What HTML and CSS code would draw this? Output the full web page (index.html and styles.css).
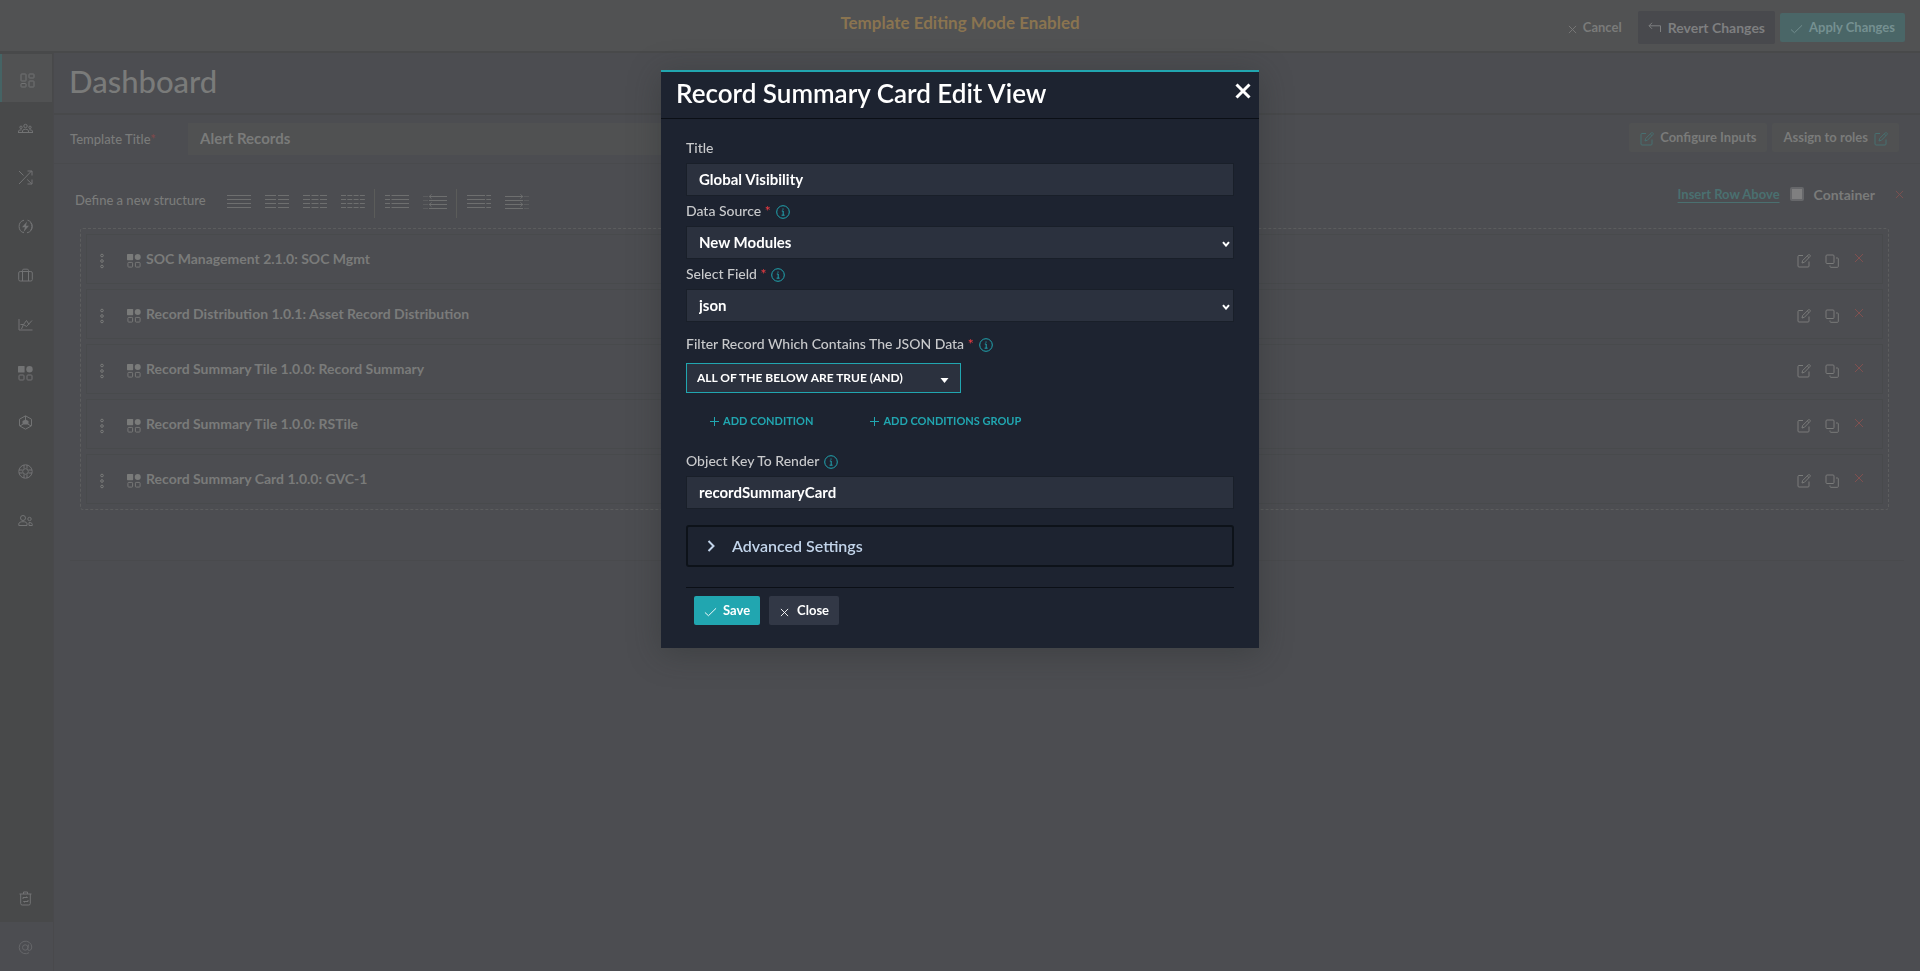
FILE: index.html
```html
<!DOCTYPE html>
<html lang="en">
<head>
<meta charset="utf-8">
<title>Dashboard</title>
<link rel="stylesheet" href="styles.css">
</head>
<body>
<svg class="defs" aria-hidden="true">
  <symbol id="i-x" viewBox="0 0 10 10"><path d="M1 1l8 8M9 1L1 9"/></symbol>
  <symbol id="i-check" viewBox="0 0 14 10"><path d="M1 5.5L4.8 9L13 1"/></symbol>
  <symbol id="i-edit" viewBox="0 0 14 14"><path d="M6 1.5H2a1 1 0 0 0-1 1V12a1 1 0 0 0 1 1h9a1 1 0 0 0 1-1V7.500M5 9l.6-2.400L11.400.8a.8.8 0 0 1 1.200 0l.5.5a.8.8 0 0 1 0 1.100L7.400 8.300zM10.300 2l1.700 1.700"/></symbol>
  <symbol id="i-copy" viewBox="0 0 14 14"><rect x="1" y="1" width="8" height="8.500" rx="1"/><path d="M11 4h1.500a.8.8 0 0 1 .8.8v7.700a.8.8 0 0 1-.8.8H5.800a.8.8 0 0 1-.8-.8V11.500"/></symbol>
  <symbol id="i-widget" viewBox="0 0 15 15"><rect class="solid" x="0" y="0" width="6.600" height="6.600" rx=".6"/><circle class="solid" cx="11.500" cy="3.300" r="3.200"/><rect x="1" y="9" width="5" height="5" rx=".8"/><rect x="9" y="9" width="5" height="5" rx=".8"/></symbol>
  <symbol id="i-dots" viewBox="0 0 4 16"><circle cx="2" cy="2.500" r="1.300"/><circle cx="2" cy="8" r="1.300"/><circle cx="2" cy="13.500" r="1.300"/></symbol>
  <symbol id="i-info" viewBox="0 0 14 14"><circle cx="7" cy="7" r="6.300"/><path d="M5.800 6h1.400v4M5.600 10.200h3M7 3.500v1.200"/></symbol>
  <symbol id="i-down" viewBox="0 0 8 6"><path d="M1 1.200L4 4.600L7 1.200"/></symbol>
  <symbol id="i-plus" viewBox="0 0 9 9"><path d="M4.500 0v9M0 4.500h9"/></symbol>
</svg>

<div class="app">
  <header class="topbar">
    <p class="mode">Template Editing Mode Enabled</p>
    <div class="top-actions">
      <button class="btn plain"><svg class="ic s9"><use href="#i-x"/></svg>Cancel</button>
      <button class="btn revert"><svg class="ic s14" viewBox="0 0 14 12"><path d="M4 .8L1 3.800L4 6.800M1 3.800h11.500V10"/></svg>Revert Changes</button>
      <button class="btn apply"><svg class="ic check"><use href="#i-check"/></svg>Apply Changes</button>
    </div>
  </header>

  <div class="body">
    <nav class="sidebar" aria-label="Main">
      <a class="nav active" href="#" aria-label="Dashboard"><svg class="ic s15" viewBox="0 0 15 15"><rect x="1" y="1" width="5" height="7" rx=".5"/><rect x="9" y="1" width="5" height="4" rx=".5"/><rect x="1" y="10.500" width="5" height="3.500" rx=".5"/><rect x="9" y="8" width="5" height="6" rx=".5"/></svg></a>
      <a class="nav" href="#" aria-label="Teams"><svg class="ic s15" viewBox="0 0 15 15"><circle cx="7.500" cy="5" r="1.700"/><circle cx="3" cy="6.300" r="1.200"/><circle cx="12" cy="6.300" r="1.200"/><path d="M4.500 11.500V10q0-1.800 3-1.800t3 1.800v1.500zM.6 11.500V10q0-1.200 3-1.200M14.400 11.500V10q0-1.200-3-1.200M0 11.500h15"/></svg></a>
      <a class="nav" href="#" aria-label="Automation"><svg class="ic s15" viewBox="0 0 15 15"><path d="M1 14L13.500 1M9.500 1h4.500v4.500M1 1l4.500 4.500M9.200 9.500l4.500 4.300M9.500 14H14V9.500"/></svg></a>
      <a class="nav" href="#" aria-label="Response"><svg class="ic s15" viewBox="0 0 15 15"><path d="M9.500 1.200A6.500 6.500 0 0 1 9 13.800M6 13.800A6.500 6.500 0 0 1 6 1.200M12.500 3.500a6.500 6.500 0 0 1 0 8"/><path class="solid" d="M9 2.500L4 8.300h3L5.500 13L11 6.700H8z"/></svg></a>
      <a class="nav" href="#" aria-label="Resources"><svg class="ic s15" viewBox="0 0 15 15"><rect x=".7" y="3.500" width="13.600" height="9.500" rx="1.500"/><path d="M4.500 13V2.500a1.300 1.300 0 0 1 1.300-1.300h3.400a1.300 1.300 0 0 1 1.300 1.300V13"/></svg></a>
      <a class="nav" href="#" aria-label="Reports"><svg class="ic s15" viewBox="0 0 15 15"><path d="M1 2v11h13.500M3.500 12l2-4.500 3 2L14 3.500M2.500 7.500h3l3-4 2.500 4"/></svg></a>
      <a class="nav" href="#" aria-label="Widgets"><svg class="ic s15"><use href="#i-widget"/></svg></a>
      <a class="nav" href="#" aria-label="Content hub"><svg class="ic s15" viewBox="0 0 15 15"><path d="M7.500.8l6 3.400v6.600l-6 3.400-6-3.400V4.200zM7.500 1v4M2 10.800l3-1.500M13 10.800l-3-1.500"/><path class="solid" d="M7.500 4.500l3 1.500v3.500h-6V6z"/></svg></a>
      <a class="nav" href="#" aria-label="Help"><svg class="ic s15" viewBox="0 0 15 15"><circle cx="7.500" cy="7.500" r="6.700"/><circle cx="7.500" cy="7.500" r="2.800"/><path d="M6 1v3.500M9 1v3.500M6 10.500V14M9 10.500V14M1 6h3.500M1 9h3.500M10.500 6H14M10.500 9H14"/></svg></a>
      <a class="nav" href="#" aria-label="Users"><svg class="ic s15" viewBox="0 0 15 15"><circle cx="5" cy="5" r="2.500"/><circle cx="11.500" cy="6" r="1.700"/><path d="M.8 12.500V11q0-2.300 4.200-2.300T9 11v1.500zM11 9.500q3.300-.2 3.300 2v1H11z"/></svg></a>
      <div class="nav-space"></div>
      <a class="nav" href="#" aria-label="Recycle bin"><svg class="ic s15" viewBox="0 0 15 15"><path d="M1.500 3h12M5.500 3V1h4v2M2.700 3v9.500a1.500 1.500 0 0 0 1.500 1.500h6.600a1.500 1.500 0 0 0 1.500-1.500V3M5 8V6.500h4.500L8.500 5.500M10 9v1.500H5.500l1 1"/></svg></a>
      <a class="nav about" href="#" aria-label="About"><svg class="ic s15" viewBox="0 0 15 15"><circle cx="7.200" cy="7.500" r="2.700"/><path d="M10.500 4.500L9.800 9q0 1.500 1.500 1.500 2.500-.3 2.500-3.500A6.300 6.300 0 1 0 11 12.700"/></svg></a>
    </nav>

    <main class="main">
      <h1 class="page-title">Dashboard</h1>
      <div class="template-row">
        <label class="template-label" for="tpl">Template Title<span class="star">*</span></label>
        <input class="template-input" id="tpl" type="text" value="Alert Records">
        <div class="template-actions">
          <button class="btn soft"><svg class="ic s14 teal"><use href="#i-edit"/></svg>Configure Inputs</button>
          <button class="btn soft"><span>Assign to roles</span><svg class="ic s14 teal"><use href="#i-edit"/></svg></button>
        </div>
      </div>

      <section class="structure">
        <div class="structure-bar">
          <span class="structure-label">Define a new structure</span>
          <div class="layouts">
            <button class="lay" aria-label="One column"><svg class="lines" viewBox="0 0 24 16"><path d="M0 2.500h24M0 6.500h24M0 10.500h24M0 14.500h24"/></svg></button>
            <button class="lay" aria-label="Two columns"><svg class="lines" viewBox="0 0 24 16"><path stroke-dasharray="11 2" d="M0 2.500h24M0 6.500h24M0 10.500h24M0 14.500h24"/></svg></button>
            <button class="lay" aria-label="Three columns"><svg class="lines" viewBox="0 0 24 16"><path stroke-dasharray="7 1.500" d="M0 2.500h24M0 6.500h24M0 10.500h24M0 14.500h24"/></svg></button>
            <button class="lay" aria-label="Four columns"><svg class="lines" viewBox="0 0 24 16"><path stroke-dasharray="5 1.300" d="M0 2.500h24M0 6.500h24M0 10.500h24M0 14.500h24"/></svg></button>
          </div>
          <div class="layouts ruled">
            <button class="lay" aria-label="Narrow left"><svg class="lines" viewBox="0 0 24 16"><path stroke-dasharray="5 1.500 20 0" d="M0 2.500h24M0 6.500h24M0 10.500h24M0 14.500h24"/></svg></button>
            <button class="lay low" aria-label="Collapsible left"><svg class="lines" viewBox="0 0 24 16"><path class="faint" d="M0 2.500h5M0 6.500h5M0 10.500h5M0 14.500h5"/><path d="M6 2.500h18M6 6.500h18M6 10.500h18M6 14.500h18M8.500.3L6.300 2.500l2.200 2.200M8.500 8.300l-2.200 2.200 2.200 2.200"/></svg></button>
          </div>
          <div class="layouts ruled">
            <button class="lay" aria-label="Narrow right"><svg class="lines" viewBox="0 0 24 16"><path stroke-dasharray="18 1.300" d="M0 2.500h24M0 6.500h24M0 10.500h24M0 14.500h24"/></svg></button>
            <button class="lay low" aria-label="Collapsible right"><svg class="lines" viewBox="0 0 24 16"><path class="faint" d="M19 2.500h5M19 6.500h5M19 10.500h5M19 14.500h5"/><path d="M0 2.500h18M0 6.500h18M0 10.500h18M0 14.500h18M15.500.3l2.200 2.200-2.200 2.200M15.500 8.300l2.200 2.200-2.200 2.200"/></svg></button>
          </div>
          <div class="row-tools">
            <a class="insert" href="#">Insert Row Above</a>
            <label class="container-check"><input type="checkbox">Container</label>
            <button class="icon-btn red" aria-label="Remove row"><svg class="ic s9"><use href="#i-x"/></svg></button>
          </div>
        </div>

        <ul class="widgets">
          <li class="widget"><svg class="dots"><use href="#i-dots"/></svg><svg class="ic s14 mark"><use href="#i-widget"/></svg><span class="name">SOC Management 2.1.0: SOC Mgmt</span><button class="icon-btn" aria-label="Edit"><svg class="ic s14"><use href="#i-edit"/></svg></button><button class="icon-btn" aria-label="Copy"><svg class="ic s14"><use href="#i-copy"/></svg></button><button class="icon-btn red" aria-label="Remove"><svg class="ic s10"><use href="#i-x"/></svg></button></li>
          <li class="widget"><svg class="dots"><use href="#i-dots"/></svg><svg class="ic s14 mark"><use href="#i-widget"/></svg><span class="name">Record Distribution 1.0.1: Asset Record Distribution</span><button class="icon-btn" aria-label="Edit"><svg class="ic s14"><use href="#i-edit"/></svg></button><button class="icon-btn" aria-label="Copy"><svg class="ic s14"><use href="#i-copy"/></svg></button><button class="icon-btn red" aria-label="Remove"><svg class="ic s10"><use href="#i-x"/></svg></button></li>
          <li class="widget"><svg class="dots"><use href="#i-dots"/></svg><svg class="ic s14 mark"><use href="#i-widget"/></svg><span class="name">Record Summary Tile 1.0.0: Record Summary</span><button class="icon-btn" aria-label="Edit"><svg class="ic s14"><use href="#i-edit"/></svg></button><button class="icon-btn" aria-label="Copy"><svg class="ic s14"><use href="#i-copy"/></svg></button><button class="icon-btn red" aria-label="Remove"><svg class="ic s10"><use href="#i-x"/></svg></button></li>
          <li class="widget"><svg class="dots"><use href="#i-dots"/></svg><svg class="ic s14 mark"><use href="#i-widget"/></svg><span class="name">Record Summary Tile 1.0.0: RSTile</span><button class="icon-btn" aria-label="Edit"><svg class="ic s14"><use href="#i-edit"/></svg></button><button class="icon-btn" aria-label="Copy"><svg class="ic s14"><use href="#i-copy"/></svg></button><button class="icon-btn red" aria-label="Remove"><svg class="ic s10"><use href="#i-x"/></svg></button></li>
          <li class="widget"><svg class="dots"><use href="#i-dots"/></svg><svg class="ic s14 mark"><use href="#i-widget"/></svg><span class="name">Record Summary Card 1.0.0: GVC-1</span><button class="icon-btn" aria-label="Edit"><svg class="ic s14"><use href="#i-edit"/></svg></button><button class="icon-btn" aria-label="Copy"><svg class="ic s14"><use href="#i-copy"/></svg></button><button class="icon-btn red" aria-label="Remove"><svg class="ic s10"><use href="#i-x"/></svg></button></li>
        </ul>
      </section>
    </main>
  </div>
</div>

<div class="overlay">
  <div class="modal" role="dialog" aria-modal="true" aria-labelledby="dlg-title">
    <div class="modal-head">
      <h2 class="modal-title" id="dlg-title">Record Summary Card Edit View</h2>
      <button class="modal-x" aria-label="Close dialog"><svg class="ic s16" viewBox="0 0 16 16"><path d="M1.500 1.500l13 13M14.500 1.500l-13 13"/></svg></button>
    </div>
    <form class="modal-body">
      <div class="field">
        <div class="label-row"><label class="label" for="f-title">Title</label></div>
        <input class="control" id="f-title" type="text" value="Global Visibility">
      </div>
      <div class="field">
        <div class="label-row"><label class="label" for="f-src">Data Source <span class="req">*</span></label><svg class="ic s14 info"><use href="#i-info"/></svg></div>
        <div class="select"><select class="control" id="f-src"><option>New Modules</option></select><svg class="ic chev"><use href="#i-down"/></svg></div>
      </div>
      <div class="field">
        <div class="label-row"><label class="label" for="f-field">Select Field <span class="req">*</span></label><svg class="ic s14 info"><use href="#i-info"/></svg></div>
        <div class="select"><select class="control" id="f-field"><option>json</option></select><svg class="ic chev"><use href="#i-down"/></svg></div>
      </div>
      <div class="filter">
        <div class="label-row"><label class="label" for="f-logic">Filter Record Which Contains The JSON Data <span class="req">*</span></label><svg class="ic s14 info"><use href="#i-info"/></svg></div>
        <div class="select logic"><select class="logic-control" id="f-logic"><option>ALL OF THE BELOW ARE TRUE (AND)</option></select><svg class="caret" viewBox="0 0 8 5"><path d="M0 0h8L4 5z"/></svg></div>
        <div class="adds">
          <button class="add" type="button"><svg class="ic s9"><use href="#i-plus"/></svg>ADD CONDITION</button>
          <button class="add" type="button"><svg class="ic s9"><use href="#i-plus"/></svg>ADD CONDITIONS GROUP</button>
        </div>
      </div>
      <div class="field">
        <div class="label-row"><label class="label" for="f-key">Object Key To Render</label><svg class="ic s14 info"><use href="#i-info"/></svg></div>
        <input class="control" id="f-key" type="text" value="recordSummaryCard">
      </div>
      <button class="advanced" type="button"><svg class="ic adv-ic" viewBox="0 0 8 12"><path d="M1.500 1L6.500 6l-5 5"/></svg><span>Advanced Settings</span></button>
      <div class="modal-foot">
        <button class="btn save" type="button"><svg class="ic check"><use href="#i-check"/></svg>Save</button>
        <button class="btn close" type="button"><svg class="ic s9"><use href="#i-x"/></svg>Close</button>
      </div>
    </form>
  </div>
</div>
</body>
</html>
```
FILE: styles.css
```css
* { box-sizing: border-box; }

body {
  margin: 0;
  background: #4c4d51;
  color: #7a7b7a;
  font-family: Lato, "Liberation Sans", sans-serif;
  font-size: 14px;
  font-weight: 700;
}

button, input, select {
  font: inherit;
  color: inherit;
  border: 0;
  background: none;
  padding: 0;
  margin: 0;
}

.defs { display: none; }

.ic {
  flex: none;
  fill: none;
  stroke: currentColor;
  stroke-width: 1;
}
.solid { fill: currentColor; stroke: none; }
.s9 { width: 9px; height: 9px; }
.s10 { width: 10px; height: 10px; }
.s14 { width: 14px; height: 14px; }
.s15 { width: 15px; height: 15px; }
.s16 { width: 16px; height: 16px; stroke-width: 3; }
.check { width: 13px; height: 10px; }
.teal { color: #477071; }

.app {
  display: flex;
  flex-direction: column;
  min-height: 100vh;
}

.topbar {
  display: grid;
  grid-template-columns: 1fr auto 1fr;
  align-items: center;
  height: 53px;
  padding: 0 15px;
  background: #515253;
  border-bottom: 2px solid #48494a;
}
.mode {
  grid-column: 2;
  margin: 0 0 6px 0;
  font-size: 17px;
  line-height: 20px;
  color: #8a7450;
}
.top-actions {
  display: flex;
  justify-content: flex-end;
  align-items: center;
  gap: 5px;
  padding-top: 4px;
}

.btn {
  display: inline-flex;
  align-items: center;
  gap: 6px;
  height: 29px;
  padding: 0 10px 2px;
  border-radius: 2px;
  font-size: 13px;
}
.btn .ic { margin-top: 5px; }
.plain { padding-right: 11px; }
.revert {
  height: 33px;
  padding: 0 10px 1px;
  background: #48494d;
  color: #7e7f80;
  font-size: 14px;
}
.revert .ic { margin-top: 2px; }
.apply { background: #4a6667; color: #759091; }
.soft { background: #505152; gap: 6px; padding: 0 11px 2px; }

.body { display: flex; flex: 1; }

.sidebar {
  display: flex;
  flex-direction: column;
  flex: none;
  width: 54px;
  background: #48494a;
  border-right: 1px solid #49494c;
  padding-top: 1px;
}
.nav {
  display: flex;
  align-items: center;
  justify-content: center;
  height: 49px;
  padding: 2px 2px 0 0;
  color: #727374;
}
.nav.active {
  height: 48px;
  margin: 0 1px 1px 0;
  padding: 4px 0 0 0;
  background: #515253;
  border-left: 2px solid #456465;
}
.nav-space { flex: 1; }
.about { background: #4c4d51; color: #66676a; }

.main { flex: 1; min-width: 0; }

.page-title {
  margin: 0;
  padding: 10px 15px 14px;
  font-size: 31px;
  line-height: 36px;
  font-weight: 500;
  border-bottom: 2px solid #48494b;
}

.template-row {
  display: flex;
  align-items: flex-start;
  height: 49px;
  padding: 8px 21px 0 16px;
  border-bottom: 1px solid #494a4d;
}
.template-label {
  width: 118px;
  line-height: 32px;
  font-size: 13px;
  font-weight: 500;
}
.star { color: #80494b; }
.template-input {
  flex: 0 1 700px;
  min-width: 0;
  height: 32px;
  padding: 0 12px 2px;
  background: #505152;
  font-size: 15px;
}
.template-actions { display: flex; gap: 5px; margin-left: auto; }

.structure {
  margin: 0 16px;
  padding-bottom: 50px;
  border-bottom: 1px solid #494a4d;
}
.structure-bar {
  display: flex;
  align-items: flex-start;
  height: 64px;
  padding: 25px 0 0 5px;
}
.structure-label { width: 145px; line-height: 22px; font-size: 13px; font-weight: 500; }
.layouts {
  display: flex;
  gap: 14px;
  height: 29px;
  padding: 4px 9px 0 7px;
}
.ruled { padding-left: 10px; border-left: 1px solid #5b5c5a; }
.lay { display: block; height: 16px; }
.low { padding-top: 1px; }
.lines {
  display: block;
  width: 24px;
  height: 16px;
  fill: none;
  stroke: #6e6f6f;
}
.faint { stroke: #5b5c5e; }
.row-tools {
  display: flex;
  align-items: center;
  gap: 10px;
  height: 10px;
  margin-left: auto;
  font-size: 13px;
}
.insert { color: #4a7070; text-underline-offset: 3px; }
.container-check { display: flex; align-items: center; gap: 10px; font-size: 14px; }
.container-check input {
  appearance: none;
  width: 14px;
  height: 14px;
  border: 2px solid #66676a;
  border-radius: 2px;
  background: #7f7f80;
}
.icon-btn { display: flex; }
.row-tools .icon-btn { margin-left: 10px; }
.red { color: #80504f; }

.widgets {
  display: flex;
  flex-direction: column;
  gap: 5px;
  list-style: none;
  margin: 0 15px 0 10px;
  padding: 5px;
  border: 1px dashed #5c5d5e;
  border-radius: 3px;
}
.widget {
  display: flex;
  align-items: center;
  height: 50px;
  padding: 4px 16px 0 13px;
  border: 1px solid #484a4c;
}
.dots {
  width: 4px;
  height: 16px;
  margin-right: 23px;
  fill: none;
  stroke: currentColor;
}
.mark { margin-right: 5px; }
.name { flex: 1; padding-bottom: 5px; }
.widget .icon-btn { margin-left: 14px; }
.widget .red { margin-left: 15px; padding: 0 2px 6px 0; }

.overlay {
  position: fixed;
  inset: 0;
  display: flex;
  justify-content: center;
  align-items: flex-start;
  padding-top: 70px;
}
.modal {
  width: 598px;
  max-width: 100%;
  background: #1d2330;
  border-top: 2px solid #21a6b0;
  box-shadow: 0 5px 30px rgba(40, 44, 46, 0.4);
  color: #fff;
}
.modal-head {
  display: flex;
  justify-content: space-between;
  align-items: flex-start;
  padding: 6px 8px 10px 15px;
  border-bottom: 1px solid #0b0f16;
}
.modal-title {
  margin: 0;
  font-size: 26px;
  line-height: 30px;
  font-weight: 600;
}
.modal-x { display: flex; padding-top: 5px; }

.modal-body { padding: 19px 25px 15px; }
.label { font-weight: 500; color: #c9cacc; font-size: 14px; line-height: 20px; }
.label-row { display: flex; align-items: center; gap: 5px; padding-bottom: 5px; }
.info { color: #21a6b0; margin-top: 2px; }
.req { color: #ef3b41; }
.field { margin-bottom: 5px; }
.control {
  display: block;
  width: 100%;
  height: 33px;
  padding: 0 12px 2px;
  background: #2b313e;
  border: 1px solid #191f29;
  font-size: 15px;
  appearance: none;
}
.select { position: relative; }
.chev {
  position: absolute;
  right: 4px;
  top: 15px;
  width: 8px;
  height: 6px;
  stroke-width: 2;
}
.filter { padding-top: 7px; }
.logic { width: 275px; margin-top: 4px; }
.logic-control {
  display: block;
  width: 100%;
  height: 30px;
  padding: 0 10px 2px;
  background: #2b313e;
  border: 1px solid #21a6b0;
  font-size: 12px;
  appearance: none;
}
.caret {
  position: absolute;
  right: 12px;
  top: 15px;
  width: 9px;
  height: 5px;
  fill: #fff;
}
.adds { display: flex; gap: 57px; padding: 18px 0 20px 24px; }
.add {
  display: flex;
  align-items: center;
  gap: 4px;
  font-size: 11px;
  line-height: 20px;
  color: #21a6b0;
}
.advanced {
  display: flex;
  align-items: center;
  gap: 17px;
  width: 100%;
  height: 42px;
  margin-top: 16px;
  padding: 0 19px 2px;
  border: 2px solid #0d1219;
  border-radius: 3px;
  color: #c2d4ea;
  font-size: 16px;
  font-weight: 600;
}
.adv-ic { width: 8px; height: 12px; margin-top: 2px; stroke-width: 2; }
.modal-foot {
  display: flex;
  gap: 9px;
  margin-top: 20px;
  padding: 8px;
  border-top: 1px solid #0b0f16;
}
.save { background: #21a6b0; }
.close { gap: 8px; padding: 0 10px 2px 11px; background: #323846; }
```
